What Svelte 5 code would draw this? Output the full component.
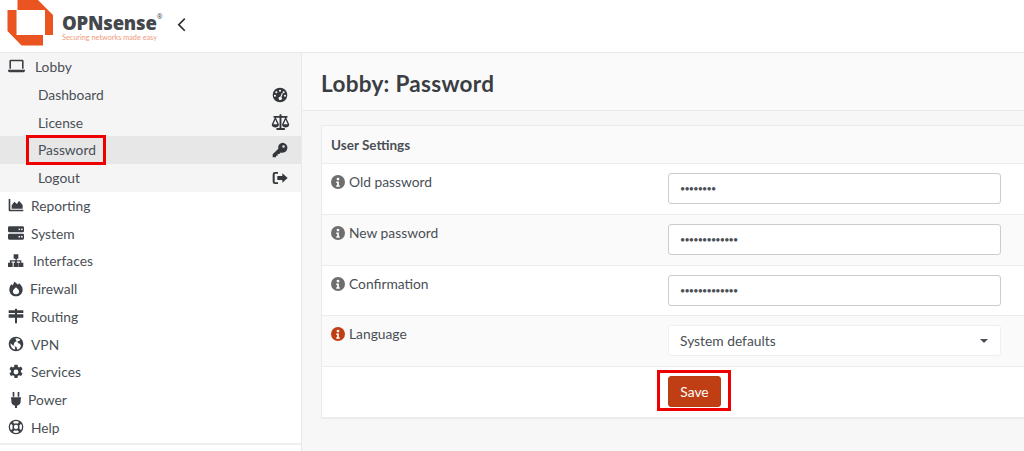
<script>
  const icons = {
    laptop: '<path fill-rule="evenodd" d="M3.800 2.500h16.400A1.800 1.800 0 0 1 22 4.300V15h-2.200V4.700H4.200V15H2V4.300a1.800 1.800 0 0 1 1.800-1.800zM0 16.500h24v1.300a2.200 2.200 0 0 1-2.200 2.200H2.200A2.200 2.200 0 0 1 0 17.800z"/>',
    gauge: '<path fill-rule="evenodd" d="M12 1a11 11 0 1 0 0 22 11 11 0 0 0 0-22zM12 4a1.600 1.600 0 1 1 0 3.200A1.600 1.600 0 0 1 12 4zM6.500 6.200a1.600 1.600 0 1 1 0 3.200 1.600 1.600 0 0 1 0-3.200zM17.500 6.200a1.600 1.600 0 1 1 0 3.200 1.600 1.600 0 0 1 0-3.200zM4.500 11.500a1.600 1.600 0 1 1 0 3.200 1.600 1.600 0 0 1 0-3.200zM19.500 11.500a1.600 1.600 0 1 1 0 3.200 1.600 1.600 0 0 1 0-3.200zM14.800 9l1.500.6-2.300 5.600a2.500 2.500 0 1 1-1.500-.6z"/>',
    scale: '<path fill-rule="evenodd" d="M10.800 1.500h2.400v2.200h7.600v2.400h-1.600l3.900 8.400c0 2.400-2.300 3.800-4.600 3.800s-4.600-1.400-4.600-3.800l3.900-8.400h-4.600v13h4.300v2.400H6.900v-2.400h3.900v-13H6.200l3.900 8.400c0 2.400-2.300 3.800-4.600 3.800S.9 16.900.9 14.500l3.900-8.400H3.200V3.700h7.600zM5.500 8.400l-2.600 5.700h5.200zM18.500 8.400l-2.600 5.700h5.200z"/>',
    key: '<path fill-rule="evenodd" d="M15.500 1a7.500 7.500 0 1 1-2.300 14.600L11 18H8.500v2.500H6V23H1.500A.5.5 0 0 1 1 22.500v-4l8.500-8.400A7.500 7.500 0 0 1 15.500 1zM17.300 4.800a1.900 1.900 0 1 0 0 3.800 1.900 1.900 0 0 0 0-3.800z"/>',
    logout: '<path d="M9 3v2.500H5a1 1 0 0 0-1 1v11a1 1 0 0 0 1 1h4V21H4.500A3.500 3.500 0 0 1 1 17.500v-11A3.500 3.500 0 0 1 4.500 3z"/><path d="M15.500 5 23.500 12l-8 7v-4H8V9h7.500z"/>',
    chart: '<path d="M1 3h2.500v16H23v2.500H2.500A1.500 1.500 0 0 1 1 20z"/><path d="M5.500 17.500v-5l4-5.500 4 3.500 3-5 5.500 6.500v5.500z"/>',
    server: '<path fill-rule="evenodd" d="M2 2h20a2 2 0 0 1 2 2v5a2 2 0 0 1-2 2H2a2 2 0 0 1-2-2V4a2 2 0 0 1 2-2zM17 5.200a1.300 1.300 0 1 0 0 2.600 1.300 1.300 0 0 0 0-2.600zM20.800 5.200a1.300 1.300 0 1 0 0 2.600 1.300 1.300 0 0 0 0-2.600zM2 13h20a2 2 0 0 1 2 2v5a2 2 0 0 1-2 2H2a2 2 0 0 1-2-2v-5a2 2 0 0 1 2-2zM17 16.200a1.300 1.300 0 1 0 0 2.600 1.300 1.300 0 0 0 0-2.600zM20.800 16.200a1.300 1.300 0 1 0 0 2.600 1.300 1.300 0 0 0 0-2.600z"/>',
    sitemap: '<path d="M8.500 2h7v6.500h-2.300v2.300H20v3.700h3v6.500h-7v-6.500h2.200v-1.900h-5v1.900H15.500v6.500h-7v-6.500h1.800v-1.900h-5v1.900H7v6.500H0v-6.500h2.800v-3.700h8.500V8.500H8.500z"/>',
    fire: '<path fill-rule="evenodd" d="M9 1c0 3-1.500 4-2.800 5.700L5.200 5C3 7 2 10 2 13c0 5.500 4.500 10 10 10s10-4.500 10-10c0-5-3.500-7.500-5.500-9.500l-1.500 2C13.500 4 11.500 2 9 1zM12 9.500c2 2 4.700 3.500 4.700 6.300 0 2.700-2.100 4.200-4.700 4.200s-4.700-1.500-4.700-4.200c0-2.800 2.700-4.300 4.700-6.300z"/>',
    signs: '<path d="M10.500 1h3v2.500h9.500v4H13.500v2h9.500v5h-9.500V23h-3v-8.500H1v-5h9.500v-2H1v-4h9.500z"/>',
    globe: '<path d="M12 1a11 11 0 1 0 0 22 11 11 0 0 0 0-22zm6.300 4.400-1.300 2.100-2.600.5.400 2.500 3 1 1.700 3.500-2.300 4-3 1.700-1.400-4.200-3-1-1.300-3.200 2-3.500 2.400-.4L11 3.600a8.500 8.500 0 0 1 7.300 1.800zM3.700 11l3.500 3 3 1 .6 5.400A8.500 8.500 0 0 1 3.700 11z" fill-rule="evenodd"/>',
    cog: '<path fill-rule="evenodd" d="M9.800 1h4.400l.7 3.200 1.700.9 3-1.200 2.200 3.800-2.400 2.200v2.200l2.400 2.200-2.200 3.800-3-1.200-1.700.9-.7 3.200H9.800l-.7-3.200-1.700-.9-3 1.200-2.200-3.800 2.400-2.200v-2.200L2.200 7.700l2.200-3.800 3 1.200 1.700-.9zM12 8.400a3.600 3.600 0 1 0 0 7.200 3.600 3.600 0 0 0 0-7.200z"/>',
    plug: '<path d="M7 0h2.500v7H7zM14.500 0H17v7h-2.500zM4.500 8h15v2.500H19V13a7 7 0 0 1-5.500 7.500V24h-3v-3.500A7 7 0 0 1 5 13v-2.500h-.5z"/>',
    ring: '<path fill-rule="evenodd" d="M12 1a11 11 0 1 0 0 22 11 11 0 0 0 0-22zM7.300 4.500a8.700 8.700 0 0 1 9.400 0l-2.300 2.600a5.300 5.300 0 0 0-4.800 0zM19.500 7.300a8.700 8.700 0 0 1 0 9.400l-2.600-2.300a5.300 5.300 0 0 0 0-4.800zM16.700 19.500a8.700 8.700 0 0 1-9.400 0l2.300-2.600a5.300 5.300 0 0 0 4.800 0zM4.500 16.700a8.700 8.700 0 0 1 0-9.400l2.600 2.300a5.300 5.300 0 0 0 0 4.800zM12 8.800a3.200 3.200 0 1 1 0 6.400 3.200 3.200 0 0 1 0-6.400z"/>',
    info: '<path fill-rule="evenodd" d="M12 0a12 12 0 1 0 0 24 12 12 0 0 0 0-24zM12 4.500a2.400 2.400 0 1 1 0 4.800 2.400 2.400 0 0 1 0-4.800zM9 11h4.500v6.500H15V20H9v-2.500h1.500v-4H9z"/>'
  };

  const lobby = [
    { label: 'Dashboard', icon: 'gauge', h: 28, s: 16 },
    { label: 'License', icon: 'scale', h: 27, s: 19 },
    { label: 'Password', icon: 'key', h: 28, s: 16, active: true },
    { label: 'Logout', icon: 'logout', h: 27.5, s: 16 }
  ];

  const menu = [
    { label: 'Reporting', icon: 'chart', w: 23 },
    { label: 'System', icon: 'server', w: 23 },
    { label: 'Interfaces', icon: 'sitemap', w: 25 },
    { label: 'Firewall', icon: 'fire', w: 22 },
    { label: 'Routing', icon: 'signs', w: 23 },
    { label: 'VPN', icon: 'globe', w: 23 },
    { label: 'Services', icon: 'cog', w: 23 },
    { label: 'Power', icon: 'plug', w: 20 },
    { label: 'Help', icon: 'ring', w: 23 }
  ];

  const fields = [
    { label: 'Old password', value: '12345678' },
    { label: 'New password', value: '1234567890123' },
    { label: 'Confirmation', value: '1234567890123' }
  ];
</script>

<div class="page">
  <header class="topbar">
    <svg class="logo" viewBox="0 0 60 52" aria-hidden="true">
      <path d="M17.500 0H38L53 15V35H45V10H17.500z" />
      <path d="M7.500 10H16.500V35H43V45.500H21.500L7.500 31z" />
    </svg>
    <div class="brand">
      <div class="wordmark">OPNsense<sup>®</sup></div>
      <div class="tagline">Securing networks made easy</div>
    </div>
    <svg class="chevron" viewBox="0 0 10 14" aria-hidden="true">
      <path d="M8 1.500 2.500 7 8 12.500" />
    </svg>
  </header>

  <div class="body">
    <nav class="sidebar">
      <div class="group">
        <div class="item top">
          <span class="ico laptop"><svg viewBox="0 0 24 24">{@html icons.laptop}</svg></span>
          <span>Lobby</span>
        </div>
        {#each lobby as sub}
          <div class="item sub" class:active={sub.active} style="height:{sub.h}px">
            <span class="sublabel" class:boxed={sub.active}>{sub.label}</span>
            <span class="subicon"><svg viewBox="0 0 24 24" style="width:{sub.s}px;height:{sub.s}px">{@html icons[sub.icon]}</svg></span>
          </div>
        {/each}
      </div>
      <div class="rest">
        {#each menu as m}
          <div class="item">
            <span class="ico" style="width:{m.w}px"><svg viewBox="0 0 24 24">{@html icons[m.icon]}</svg></span>
            <span>{m.label}</span>
          </div>
        {/each}
      </div>
    </nav>

    <main class="main">
      <div class="titlebar"><h1>Lobby: Password</h1></div>
      <section class="card">
        <h2>User Settings</h2>
        {#each fields as f, i}
          <div class="row" class:odd={i % 2 === 1}>
            <label>
              <svg class="info" viewBox="0 0 24 24">{@html icons.info}</svg>
              {f.label}
            </label>
            <input type="password" value={f.value} />
          </div>
        {/each}
        <div class="row odd">
          <label>
            <svg class="info warn" viewBox="0 0 24 24">{@html icons.info}</svg>
            Language
          </label>
          <div class="select">System defaults<span class="caret"></span></div>
        </div>
        <div class="actions">
          <div class="savebox"><button type="button">Save</button></div>
        </div>
      </section>
    </main>
  </div>
</div>

<style>
  :global(body) {
    margin: 0;
    background: #f7f7f7;
    overflow: hidden;
  }

  .page {
    font-family: Lato, "Noto Sans", sans-serif;
    font-size: 13.800px;
    color: #4a4f55;
    height: 451px;
    overflow: hidden;
  }

  .topbar {
    height: 52px;
    background: #fff;
    border-bottom: 1px solid #e9e9e9;
    display: flex;
    align-items: flex-start;
  }

  .logo {
    width: 60px;
    height: 52px;
    flex: none;
    fill: #e95420;
  }

  .brand {
    margin-left: 2px;
    padding-top: 13px;
    width: 106px;
  }

  .wordmark {
    font-family: "Open Sans", sans-serif;
    font-size: 18.500px;
    font-weight: 800;
    line-height: 20px;
    letter-spacing: -0.2px;
    color: #44484c;
  }

  .wordmark sup {
    font-size: 7px;
    font-weight: 400;
    vertical-align: 11px;
    line-height: 0;
  }

  .tagline {
    font-size: 7.300px;
    line-height: 8px;
    color: #f09a7a;
    margin-top: 1px;
    white-space: nowrap;
  }

  .chevron {
    width: 11px;
    height: 15.400px;
    margin: 17px 0 0 8px;
    fill: none;
    stroke: #2c3036;
    stroke-width: 1.500;
  }

  .body {
    display: flex;
    height: 398px;
  }

  .sidebar {
    width: 301px;
    flex: none;
    background: #fff;
    border-right: 1px solid #e9e9e9;
  }

  .group {
    background: #f5f5f5;
  }

  .rest {
    padding-bottom: 1.500px;
    border-bottom: 2px solid #eee;
    background: #fff;
  }

  .item {
    height: 27.750px;
    display: flex;
    align-items: center;
    padding-left: 8px;
    box-sizing: border-box;
  }

  .top {
    height: 28px;
    padding-bottom: 1px;
  }

  .ico {
    width: 27px;
    flex: none;
    display: flex;
  }

  .ico svg {
    width: 16px;
    height: 16px;
    fill: #3b3f44;
  }

  .ico.laptop svg {
    width: 17px;
    height: 17px;
  }

  .sub {
    padding: 0 12px 0 26px;
    justify-content: space-between;
  }

  .sub.active {
    background: #e7e7e7;
  }

  .sublabel {
    padding: 0 7px 0 9px;
    line-height: 24px;
    border: 3px solid transparent;
    margin-right: auto;
  }

  .sublabel.boxed {
    border-color: #ee0000;
  }

  .subicon {
    width: 18px;
    display: flex;
    justify-content: center;
  }

  .subicon svg {
    flex: none;
    fill: #33373b;
  }

  .main {
    flex: 1;
    min-width: 0;
  }

  .titlebar {
    height: 57px;
    background: #fafafa;
    border-bottom: 1px solid #e9e9e9;
    display: flex;
    align-items: center;
    padding-left: 19px;
  }

  h1 {
    margin: 3px 0 0;
    font-size: 22.500px;
    font-weight: 700;
    letter-spacing: 0.3px;
    color: #3a3e43;
  }

  .card {
    margin: 14px 0 0 19px;
    border-left: 1px solid #e9e9e9;
    border-top: 1px solid #ececec;
    border-bottom: 2px solid #ececec;
    background: #fff;
  }

  h2 {
    margin: 0;
    height: 37px;
    padding-left: 9px;
    display: flex;
    align-items: center;
    font-size: 13.500px;
    font-weight: 700;
    background: #fafafa;
    border-bottom: 1px solid #ececec;
  }

  .row {
    height: 50.800px;
    box-sizing: border-box;
    border-bottom: 1px solid #ececec;
    display: flex;
    align-items: flex-start;
    padding-left: 9px;
  }

  .row.odd {
    background: #fafafa;
  }

  label {
    width: 337px;
    flex: none;
    padding-top: 9px;
    display: flex;
    align-items: center;
    gap: 4px;
    line-height: 18px;
  }

  .info {
    width: 14px;
    height: 14px;
    fill: #6e6e6e;
  }

  .info.warn {
    fill: #c03e14;
  }

  input,
  .select {
    width: 333px;
    height: 31px;
    margin-top: 9px;
    box-sizing: border-box;
    border: 1px solid #ccc;
    border-radius: 3px;
    padding: 0 11px;
    background: #fff;
    font-family: Lato, sans-serif;
    font-size: 13.800px;
    color: #4a4f55;
  }

  input {
    font-size: 9px;
    letter-spacing: -0.8px;
  }

  .select {
    display: flex;
    align-items: center;
    justify-content: space-between;
    border-color: #efefef;
  }

  .caret {
    border: 4px solid transparent;
    border-top-color: #4a4f55;
    border-bottom: 0;
    margin-right: 1px;
  }

  .actions {
    height: 50px;
    padding-left: 335px;
    box-sizing: border-box;
    padding-top: 3px;
  }

  .savebox {
    width: 74px;
    height: 41px;
    border: 3px solid #ee0000;
    padding: 3px 0 0 8px;
    box-sizing: border-box;
  }

  button {
    display: block;
    width: 53px;
    height: 31px;
    border: 1px solid #b93d13;
    border-radius: 3px;
    background: #c03e14;
    color: #fff;
    font-family: Lato, sans-serif;
    font-size: 13.800px;
    padding: 0;
  }
</style>
